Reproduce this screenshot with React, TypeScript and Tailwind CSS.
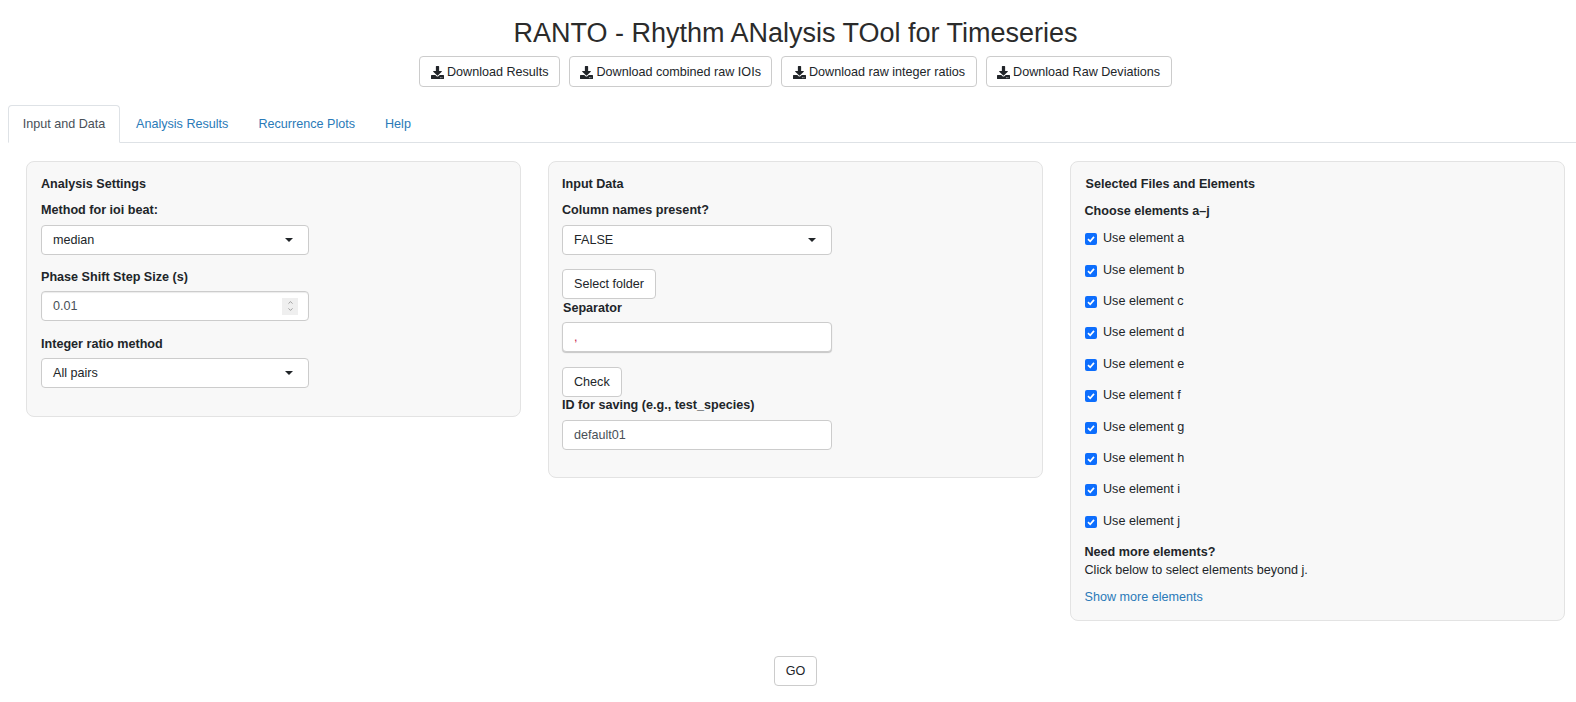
import React from 'react';
import { FaDownload } from 'react-icons/fa';
import { ChevronUp, ChevronDown } from 'lucide-react';

const downloads = ['Download Results', 'Download combined raw IOIs', 'Download raw integer ratios', 'Download Raw Deviations'];
const tabs = ['Analysis Results', 'Recurrence Plots', 'Help'];
const elements = ['a', 'b', 'c', 'd', 'e', 'f', 'g', 'h', 'i', 'j'];

const Button = ({ children, className = 'h-[30px] px-[11px]' }: { children: React.ReactNode; className?: string }) => (
  <button className={`bg-white border border-[#ccc] rounded-[4px] text-[12.6px] text-[#212529] flex items-center ${className}`}>
    {children}
  </button>
);

const Select = ({ value, className }: { value: string; className: string }) => (
  <div className={`h-[30px] pl-[11px] pr-[15px] bg-white border border-[#ccc] rounded-[4px] flex items-center justify-between text-[12.6px] text-[#212529] ${className}`}>
    <span>{value}</span>
    <span className="w-0 h-0 border-x-[4px] border-x-transparent border-t-[4px] border-t-[#212529]" />
  </div>
);

const Panel = ({ title, className, titleClass = '', children }: { title: string; className: string; titleClass?: string; children: React.ReactNode }) => (
  <section className={`bg-[#f8f8f8] border border-[#e3e3e3] rounded-[8px] ${className}`}>
    <h3 className={`text-[12.6px] font-bold leading-[20px] text-[#212529] mt-[12px] ${titleClass}`}>{title}</h3>
    {children}
  </section>
);

const Label = ({ children, className = '' }: { children: React.ReactNode; className?: string }) => (
  <div className={`text-[12.6px] font-bold leading-[20px] text-[#212529] ${className}`}>{children}</div>
);

const Check = ({ letter }: { letter: string }) => (
  <div className="h-[31.4px] flex items-center text-[12.6px] text-[#212529]">
    <span className="w-[12px] h-[12px] mt-[3px] mr-[6.5px] rounded-[2px] bg-[#0d6efd] flex items-center justify-center">
      <svg width="10" height="10" viewBox="0 0 10 10" fill="none">
        <path d="M2 5.2 L4.2 7.3 L8 2.9" stroke="white" strokeWidth="1.7" />
      </svg>
    </span>
    <span className="pt-[2px]">Use element {letter}</span>
  </div>
);

export default function App() {
  return (
    <div className="relative w-full h-[702px] overflow-hidden bg-white font-['Liberation_Sans',Arial,sans-serif] text-[#212529]">
      <h1 className="text-[27px] leading-[34px] text-center pt-[16px] pl-[15px] h-[50px] text-[#2b2b2b]">
        RANTO - Rhythm ANalysis TOol for Timeseries
      </h1>

      <div className="flex justify-center gap-[9px] mt-[6px] pl-[15px]">
        {downloads.map(label => (
          <Button key={label} className="h-[31px] pt-[1px] px-[10.5px]">
            <FaDownload className="w-[13px] h-[13px] mr-[3px] text-[#212529]" />
            {label}
          </Button>
        ))}
      </div>

      {/* Tabs */}
      <div className="ml-[8px] mt-[18px] h-[38px] border-b border-[#dee2e6] flex text-[12.6px]">
        <div className="h-[38px] w-[112px] bg-white border border-[#dee2e6] border-b-white rounded-t-[4px] flex items-center justify-center text-[#495057]">
          Input and Data
        </div>
        <div className="flex ml-[1px]">
          {tabs.map(tab => (
            <a key={tab} className="h-[38px] px-[15px] flex items-center text-[#2a7ab8]">{tab}</a>
          ))}
        </div>
      </div>

      <div className="flex items-start gap-[27px] pl-[26px] pr-[10px] mt-[18px]">
        <Panel title="Analysis Settings" className="w-[495px] h-[256px] pl-[14px]">
          <Label className="mt-[6px]">Method for ioi beat:</Label>
          <div className="mt-[5px]"><Select value="median" className="w-[268px]" /></div>
          <Label className="mt-[12px]">Phase Shift Step Size (s)</Label>
          <div className="mt-[4px] h-[30px] w-[268px] pl-[11px] pr-[10px] bg-white border border-[#ccc] rounded-[4px] flex items-center justify-between text-[12.6px] text-[#495057] shadow-[inset_0_1px_1px_rgba(0,0,0,0.08)]">
            <span>0.01</span>
            <span className="w-[16px] h-[17px] bg-[#efefef] flex flex-col items-center justify-center text-[#666]">
              <ChevronUp className="w-[9px] h-[7px]" />
              <ChevronDown className="w-[9px] h-[7px]" />
            </span>
          </div>
          <Label className="mt-[13px]">Integer ratio method</Label>
          <div className="mt-[4px]"><Select value="All pairs" className="w-[268px]" /></div>
        </Panel>

        <Panel title="Input Data" className="w-[495px] h-[317px] pl-[13px]">
          <Label className="mt-[6px]">Column names present?</Label>
          <div className="mt-[5px]"><Select value="FALSE" className="w-[270px]" /></div>
          <Button className="h-[30px] px-[11px] mt-[14px]">Select folder</Button>
          <Label className="-mt-[1px] ml-[1px]">Separator</Label>
          <div className="mt-[4px] h-[30px] w-[270px] pl-[11px] bg-white border border-[#ccc] rounded-[4px] flex items-center text-[12.6px] text-[#c7254e] shadow-[0_1px_1px_rgba(0,0,0,0.2)]">,</div>
          <Button className="h-[30px] px-[11px] mt-[15px]">Check</Button>
          <Label className="-mt-[2px]">ID for saving (e.g., test_species)</Label>
          <div className="mt-[5px] h-[30px] w-[270px] pl-[11px] bg-white border border-[#ccc] rounded-[4px] flex items-center text-[12.6px] text-[#495057]">default01</div>
        </Panel>

        <Panel title="Selected Files and Elements" className="w-[495px] h-[460px] pl-[13.5px]" titleClass="ml-[1px]">
          <Label className="mt-[7px]">Choose elements a–j</Label>
          <div className="mt-[1px]">
            {elements.map(letter => <Check key={letter} letter={letter} />)}
          </div>
          <Label className="mt-[6px]">Need more elements?</Label>
          <div className="text-[12.6px] leading-[18px] -mt-[1px]">Click below to select elements beyond j.</div>
          <a className="block mt-[8px] text-[12.6px] leading-[20px] text-[#2a7ab8]">Show more elements</a>
        </Panel>
      </div>

      <div className="flex justify-center mt-[35px] pl-[15px]">
        <Button>GO</Button>
      </div>
    </div>
  );
}
